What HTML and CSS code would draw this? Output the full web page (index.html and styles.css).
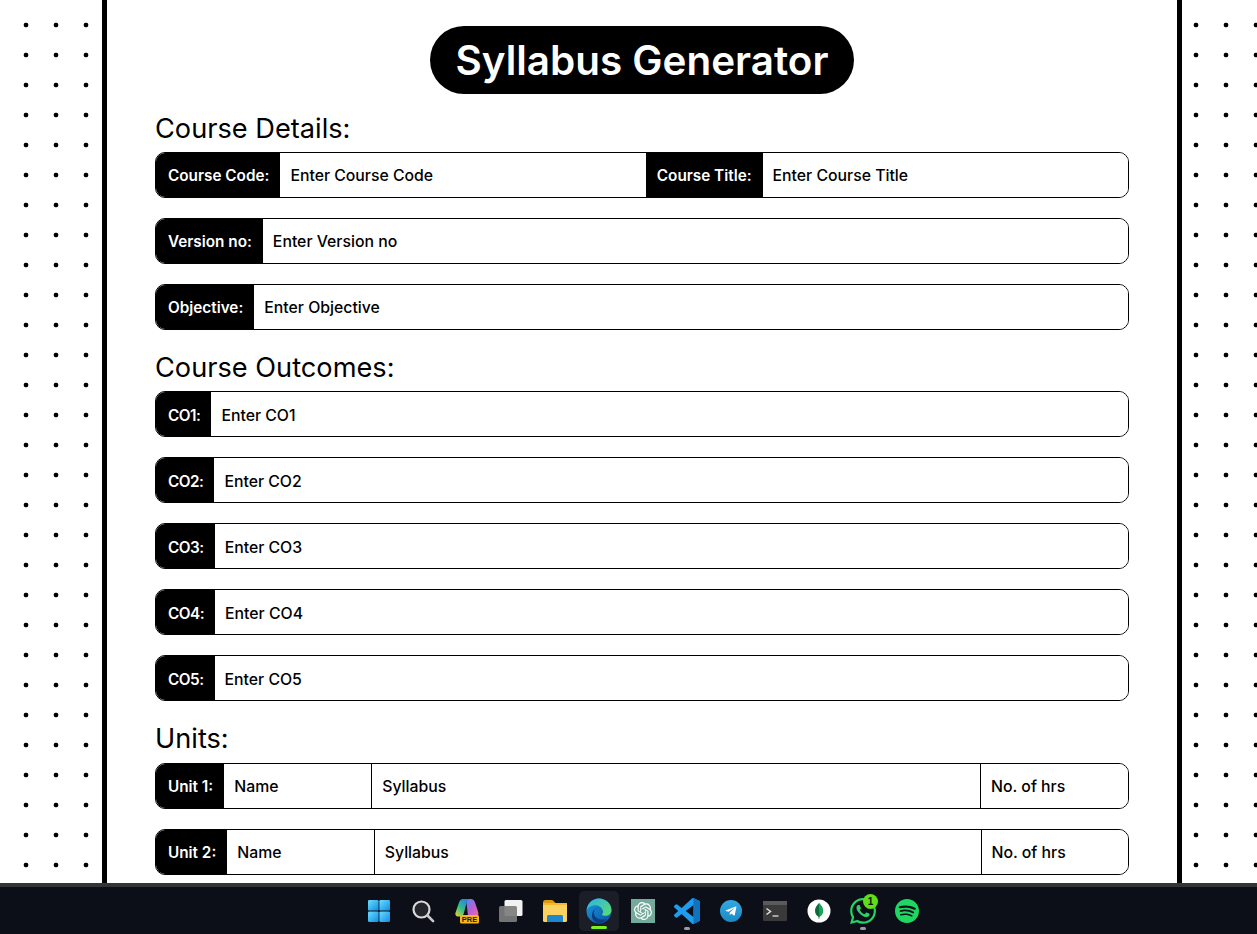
FILE: index.html
```html
<!DOCTYPE html>
<html lang="en">
<head>
  <meta charset="UTF-8" />
  <meta name="viewport" content="width=device-width, initial-scale=1.0"/>
  <title>Syllabus Generator</title>
  <link rel="stylesheet" href="styles.css">
</head>
<body>
  <div class="viewport">
    <main class="sheet">
      <h1 class="title">Syllabus Generator</h1>

      <h2 class="section-title">Course Details:</h2>
      <div class="field">
        <label class="tag tag-first">Course Code:</label>
        <input class="entry" placeholder="Enter Course Code">
        <label class="tag">Course Title:</label>
        <input class="entry" placeholder="Enter Course Title">
      </div>
      <div class="field">
        <label class="tag tag-first">Version no:</label>
        <input class="entry" placeholder="Enter Version no">
      </div>
      <div class="field">
        <label class="tag tag-first">Objective:</label>
        <input class="entry" placeholder="Enter Objective">
      </div>

      <h2 class="section-title">Course Outcomes:</h2>
      <div class="field">
        <label class="tag tag-first tag-short">CO1:</label>
        <input class="entry" placeholder="Enter CO1">
      </div>
      <div class="field">
        <label class="tag tag-first tag-short">CO2:</label>
        <input class="entry" placeholder="Enter CO2">
      </div>
      <div class="field">
        <label class="tag tag-first tag-short">CO3:</label>
        <input class="entry" placeholder="Enter CO3">
      </div>
      <div class="field">
        <label class="tag tag-first tag-short">CO4:</label>
        <input class="entry" placeholder="Enter CO4">
      </div>
      <div class="field">
        <label class="tag tag-first tag-short">CO5:</label>
        <input class="entry" placeholder="Enter CO5">
      </div>

      <h2 class="section-title">Units:</h2>
      <div class="field">
        <label class="tag tag-first">Unit 1:</label>
        <input class="entry entry-small" placeholder="Name">
        <input class="entry entry-wide" placeholder="Syllabus">
        <input class="entry entry-small" placeholder="No. of hrs">
      </div>
      <div class="field">
        <label class="tag tag-first">Unit 2:</label>
        <input class="entry entry-small" placeholder="Name">
        <input class="entry entry-wide" placeholder="Syllabus">
        <input class="entry entry-small" placeholder="No. of hrs">
      </div>
    </main>
  </div>

  <footer class="taskbar">
    <!-- Start -->
    <div class="task">
      <svg width="24" height="24" viewBox="0 0 24 24">
        <defs>
          <linearGradient id="winBlue" x1="0" y1="0" x2="1" y2="1">
            <stop offset="0" stop-color="#6fdcff"/>
            <stop offset="1" stop-color="#0a8fe6"/>
          </linearGradient>
        </defs>
        <rect x="1" y="1" width="10.6" height="10.6" rx="1.2" fill="url(#winBlue)"/>
        <rect x="12.4" y="1" width="10.6" height="10.6" rx="1.2" fill="url(#winBlue)"/>
        <rect x="1" y="12.4" width="10.6" height="10.6" rx="1.2" fill="url(#winBlue)"/>
        <rect x="12.4" y="12.4" width="10.6" height="10.6" rx="1.2" fill="url(#winBlue)"/>
      </svg>
    </div>
    <!-- Search -->
    <div class="task">
      <svg width="24" height="24" viewBox="0 0 24 24" fill="none">
        <circle cx="10.5" cy="10.5" r="8" stroke="#d9d9d9" stroke-width="2.2" fill="#23262c"/>
        <path d="M16.5 16.5l5.6 5.6" stroke="#c9c9c9" stroke-width="2.6" stroke-linecap="round"/>
      </svg>
    </div>
    <!-- Copilot -->
    <div class="task">
      <svg width="26" height="26" viewBox="0 0 26 26">
        <defs>
          <linearGradient id="copA" x1="0" y1="1" x2=".7" y2="0">
            <stop offset="0" stop-color="#f4d21f"/>
            <stop offset=".5" stop-color="#2fc08a"/>
            <stop offset="1" stop-color="#2f7de1"/>
          </linearGradient>
          <linearGradient id="copB" x1="0" y1="0" x2="1" y2="1">
            <stop offset="0" stop-color="#4f8df0"/>
            <stop offset=".5" stop-color="#b55fd8"/>
            <stop offset="1" stop-color="#f26a9a"/>
          </linearGradient>
        </defs>
        <path d="M12 1h5c2 0 3.300 1.300 4 3.500l3.300 10c.6 2-.5 3.500-2.500 3.500H14z" fill="url(#copB)"/>
        <path d="M9 1h7c-1.500 0-2.400.9-3 2.500L10 14.500c-.6 2.600-1.600 4-3 4H4C2 18.500.8 16.800 1.500 14.800L5 4.500C5.700 2.300 7 1 9 1z" fill="url(#copA)"/>
        <rect x="6" y="17" width="19" height="8.500" rx="1.500" fill="#f5b81c"/>
        <text class="pre-text" x="15.500" y="24">PRE</text>
      </svg>
    </div>
    <!-- Task view -->
    <div class="task">
      <svg width="26" height="24" viewBox="0 0 26 24">
        <rect x="6.500" y="1" width="18" height="16" rx="1.500" fill="#f2f2f2"/>
        <rect x="1" y="7" width="18" height="16" rx="1.500" fill="#7d7d7d" fill-opacity=".92"/>
      </svg>
    </div>
    <!-- Explorer -->
    <div class="task">
      <svg width="26" height="24" viewBox="0 0 26 24">
        <path d="M1 3.500C1 2.100 2 1 3.400 1h6.200c.7 0 1.300.3 1.800.8L13.500 4H1z" fill="#d99a12"/>
        <rect x="1" y="4" width="24" height="19" rx="1.500" fill="#fbd160"/>
        <rect x="1" y="4" width="24" height="2" fill="#f3b92e"/>
        <path d="M5 23v-5.500c0-.9.700-1.500 1.500-1.500h13c.8 0 1.500.6 1.500 1.500V23z" fill="#1e88cf"/>
      </svg>
    </div>
    <!-- Edge, active -->
    <div class="task task-active">
      <svg width="26" height="26" viewBox="0 0 26 26">
        <defs>
          <linearGradient id="edgeTop" x1="0" y1="0" x2="1" y2="1">
            <stop offset="0" stop-color="#2bb4e8"/>
            <stop offset="1" stop-color="#5fdc6a"/>
          </linearGradient>
          <linearGradient id="edgeLow" x1="0" y1="0" x2="1" y2="1">
            <stop offset="0" stop-color="#1b9de2"/>
            <stop offset="1" stop-color="#0b4f9e"/>
          </linearGradient>
        </defs>
        <circle cx="13" cy="13" r="12.500" fill="url(#edgeLow)"/>
        <path d="M.6 12C1.500 5.500 6.500.5 13 .5c6.500 0 12.500 5 12.500 11.500 0 3.500-2.800 5.800-6 5.800-2 0-3.500-.6-3.500-1.600 1-1 1.300-2 1-3.200C16.200 9.500 12.500 7 8.800 7.300 5 7.600 2 9.300.6 12z" fill="url(#edgeTop)"/>
        <path d="M12.800 9.800c-3.300 0-5.300 2.800-4.800 6 .6 3.800 4.500 6 8.800 5.800 1.400 0 2.800-.3 4-.9-2.200 3-5.200 4.500-8 4.600 -3-.2-4.800-1.800-6-4-1.400-3-1-8 2-10 1-1 2.500-1.500 4-1.500z" fill="#0a3d86"/>
      </svg>
      <span class="active-bar"></span>
    </div>
    <!-- ChatGPT -->
    <div class="task">
      <svg width="24" height="24" viewBox="0 0 24 24">
        <rect width="24" height="24" fill="#74aa9c"/>
        <path transform="translate(3 3) scale(.75)" fill="#fff" d="M22.2819 9.8211a5.9847 5.9847 0 0 0-.5157-4.9108 6.0462 6.0462 0 0 0-6.5098-2.9A6.0651 6.0651 0 0 0 4.9807 4.1818a5.9847 5.9847 0 0 0-3.9977 2.9 6.0462 6.0462 0 0 0 .7427 7.0966 5.98 5.98 0 0 0 .511 4.9107 6.051 6.051 0 0 0 6.5146 2.9001A5.9847 5.9847 0 0 0 13.2599 24a6.0557 6.0557 0 0 0 5.7718-4.2058 5.9894 5.9894 0 0 0 3.9977-2.9001 6.0557 6.0557 0 0 0-.7475-7.0729zm-9.022 12.6081a4.4755 4.4755 0 0 1-2.8764-1.0408l.1419-.0804 4.7783-2.7582a.7948.7948 0 0 0 .3927-.6813v-6.7369l2.02 1.1686a.071.071 0 0 1 .038.052v5.5826a4.504 4.504 0 0 1-4.4945 4.4944zm-9.6607-4.1254a4.4708 4.4708 0 0 1-.5346-3.0137l.142.0852 4.783 2.7582a.7712.7712 0 0 0 .7806 0l5.8428-3.3685v2.3324a.0804.0804 0 0 1-.0332.0615L9.74 19.9502a4.4992 4.4992 0 0 1-6.1408-1.6464zM2.3408 7.8956a4.485 4.485 0 0 1 2.3655-1.9728V11.6a.7664.7664 0 0 0 .3879.6765l5.8144 3.3543-2.0201 1.1685a.0757.0757 0 0 1-.071 0l-4.8303-2.7865A4.504 4.504 0 0 1 2.3408 7.872zm16.5963 3.8558L13.1038 8.364 15.1192 7.2a.0757.0757 0 0 1 .071 0l4.8303 2.7913a4.4944 4.4944 0 0 1-.6765 8.1042v-5.6772a.79.79 0 0 0-.407-.667zm2.0107-3.0231l-.142-.0852-4.7735-2.7818a.7759.7759 0 0 0-.7854 0L9.409 9.2297V6.8974a.0662.0662 0 0 1 .0284-.0615l4.8303-2.7866a4.4992 4.4992 0 0 1 6.6802 4.66zM8.3065 12.863l-2.02-1.1638a.0804.0804 0 0 1-.038-.0567V6.0742a4.4992 4.4992 0 0 1 7.3757-3.4537l-.142.0805L8.704 5.459a.7948.7948 0 0 0-.3927.6813zm1.0976-2.3654l2.602-1.4998 2.6069 1.4998v2.9994l-2.5974 1.4997-2.6067-1.4997Z"/>
      </svg>
    </div>
    <!-- VS Code -->
    <div class="task">
      <svg width="26" height="26" viewBox="0 0 24 24">
        <path fill="#1f9cf0" d="M23.15 2.587L18.21.21a1.494 1.494 0 0 0-1.705.29l-9.46 8.63-4.12-3.128a.999.999 0 0 0-1.276.057L.327 7.261A1 1 0 0 0 .326 8.74L3.899 12 .326 15.26a1 1 0 0 0 .001 1.479L1.65 17.94a.999.999 0 0 0 1.276.057l4.12-3.128 9.46 8.63a1.492 1.492 0 0 0 1.704.29l4.942-2.377A1.5 1.5 0 0 0 24 20.06V3.939a1.5 1.5 0 0 0-.85-1.352zm-5.146 14.861L10.826 12l7.178-5.448v10.896z"/>
        <path fill="#0f73bd" d="M18.004 0.1l5.146 2.487A1.5 1.5 0 0 1 24 3.939V20.06a1.5 1.500 0 0 1-.85 1.352l-5.146 2.488z"/>
      </svg>
      <span class="open-dot"></span>
    </div>
    <!-- Telegram -->
    <div class="task">
      <svg width="24" height="24" viewBox="0 0 24 24">
        <defs>
          <linearGradient id="tgBlue" x1="0" y1="0" x2="0" y2="1">
            <stop offset="0" stop-color="#35a8e0"/>
            <stop offset="1" stop-color="#1b8ac6"/>
          </linearGradient>
        </defs>
        <circle cx="12" cy="12" r="11" fill="url(#tgBlue)"/>
        <path transform="translate(4.800 4.800) scale(.6)" fill="#fff" d="M9.780 18.650l.28-4.230 7.680-6.920c.34-.31-.07-.46-.52-.19L7.740 13.300 3.640 12c-.88-.25-.89-.86.2-1.300l15.970-6.160c.73-.33 1.430.18 1.150 1.300l-2.720 12.810c-.19.91-.74 1.130-1.500.71L12.600 16.300l-1.990 1.930c-.23.23-.42.42-.83.42z"/>
      </svg>
    </div>
    <!-- Terminal -->
    <div class="task">
      <svg width="24" height="20" viewBox="0 0 24 20">
        <rect width="24" height="20" rx="1" fill="#3a3a3a"/>
        <rect width="24" height="4" fill="#5a5a5a"/>
        <path d="M3.500 7.500l4 3-4 3" fill="none" stroke="#e0e0e0" stroke-width="1.500"/>
        <path d="M9.500 15h6" stroke="#e0e0e0" stroke-width="1.300"/>
      </svg>
    </div>
    <!-- MongoDB Compass -->
    <div class="task">
      <svg width="24" height="24" viewBox="0 0 24 24">
        <circle cx="12" cy="12" r="11.500" fill="#fff"/>
        <path d="M12 4c2.500 2.600 4 5 4 7.800 0 2.800-1.500 5-3.500 6l-.2 2h-.6l-.2-2c-2-1-3.500-3.200-3.500-6C8 9 9.500 6.600 12 4z" fill="#0f6b3f"/>
        <path d="M12 4c2.500 2.600 4 5 4 7.800 0 2.800-1.500 5-3.500 6L12 9z" fill="#13aa52"/>
      </svg>
    </div>
    <!-- WhatsApp, one unread -->
    <div class="task">
      <svg width="26" height="26" viewBox="0 0 24 24">
        <path fill="#25d366" d="M17.472 14.382c-.297-.149-1.758-.867-2.030-.967-.273-.099-.471-.148-.67.15-.197.297-.767.966-.94 1.164-.173.199-.347.223-.644.075-.297-.15-1.255-.463-2.390-1.475-.883-.788-1.480-1.761-1.653-2.059-.173-.297-.018-.458.13-.606.134-.133.298-.347.446-.52.149-.174.198-.298.298-.497.099-.198.05-.371-.025-.52-.075-.149-.669-1.612-.916-2.207-.242-.579-.487-.5-.669-.51-.173-.008-.371-.01-.57-.01-.198 0-.52.074-.792.372-.272.297-1.040 1.016-1.040 2.479 0 1.462 1.065 2.875 1.213 3.074.149.198 2.096 3.2 5.077 4.487.709.306 1.262.489 1.694.625.712.227 1.360.195 1.871.118.571-.085 1.758-.719 2.006-1.413.248-.694.248-1.289.173-1.413-.074-.124-.272-.198-.57-.347m-5.421 7.403h-.004a9.870 9.870 0 01-5.031-1.378l-.361-.214-3.741.982.998-3.648-.235-.374a9.860 9.860 0 01-1.510-5.260c.001-5.450 4.436-9.884 9.888-9.884 2.640 0 5.122 1.030 6.988 2.898a9.825 9.825 0 012.893 6.994c-.003 5.450-4.437 9.884-9.885 9.884m8.413-18.297A11.815 11.815 0 0012.050 0C5.495 0 .16 5.335.157 11.892c0 2.096.547 4.142 1.588 5.945L.057 24l6.305-1.654a11.882 11.882 0 005.683 1.448h.005c6.554 0 11.890-5.335 11.893-11.893a11.821 11.821 0 00-3.480-8.413z"/>
      </svg>
      <span class="badge">1</span>
      <span class="open-dot"></span>
    </div>
    <!-- Spotify -->
    <div class="task">
      <svg width="24" height="24" viewBox="0 0 24 24">
        <path fill="#1ed760" d="M12 0C5.400 0 0 5.400 0 12s5.400 12 12 12 12-5.400 12-12S18.660 0 12 0zm5.521 17.340c-.24.359-.66.48-1.021.24-2.820-1.740-6.360-2.101-10.561-1.141-.418.122-.779-.179-.899-.539-.12-.421.18-.78.54-.9 4.560-1.021 8.520-.6 11.640 1.320.42.18.479.659.301 1.020zm1.440-3.300c-.301.42-.841.6-1.262.3-3.239-1.980-8.159-2.580-11.939-1.380-.479.12-1.020-.12-1.140-.6-.12-.48.12-1.021.6-1.141C9.600 9.900 15 10.561 18.720 12.840c.361.181.54.78.241 1.200zm.12-3.360C15.240 8.400 8.820 8.160 5.160 9.301c-.6.179-1.200-.181-1.380-.721-.18-.601.18-1.200.72-1.381 4.260-1.260 11.280-1.020 15.721 1.621.539.3.719 1.020.419 1.560-.299.421-1.020.599-1.559.3z"/>
      </svg>
    </div>
  </footer>
</body>
</html>
```

FILE: styles.css
```css
* {
  box-sizing: border-box;
}

html, body {
  height: 100%;
}

body {
  margin: 0;
  font-family: "Inter", "Lato", sans-serif;
  background: #fff;
  color: #000;
  display: flex;
  flex-direction: column;
  overflow: hidden;
}

/* Dotted page, sheet sits on top */
.viewport {
  height: 883px;
  overflow: hidden;
  padding-left: 102px;
  background-image: radial-gradient(circle, #000 2px, transparent 2.7px);
  background-size: 30px 30px;
  background-position: 11px 10px;
}

.sheet {
  width: 1080px;
  min-height: 100%;
  background: #fff;
  border-left: 5px solid #000;
  border-right: 5px solid #000;
  padding: 26px 48px 0;
}

.title {
  width: 424px;
  height: 68px;
  margin: 0 auto 16.7px;
  background: #000;
  color: #fff;
  border-radius: 34px;
  font-size: 40.4px;
  font-weight: 600;
  line-height: 69px;
  text-align: center;
}

.section-title {
  margin: 0;
  height: 41.3px;
  font-size: 27.2px;
  font-weight: 400;
  line-height: 35px;
}

.field {
  display: flex;
  height: 46px;
  margin-bottom: 20px;
  border: 1px solid #000;
  border-radius: 10px;
  overflow: hidden;
}

.tag {
  flex: none;
  display: flex;
  align-items: center;
  padding: 2px 11px 0;
  background: #000;
  color: #fff;
  font-size: 15.3px;
  font-weight: 600;
}

.tag-first {
  padding-left: 12px;
}

.tag-short {
  letter-spacing: -.5px;
}

.entry {
  flex: 1 1 0;
  min-width: 0;
  border: none;
  outline: none;
  padding: 2px 10px 0;
  font: 500 15.8px "Inter", "Lato", sans-serif;
  color: #000;
}

.entry::placeholder {
  color: #000;
  opacity: 1;
}

.entry-small {
  flex: 1 1 0;
}

.entry-wide {
  flex: 4.63 1 0;
  border-left: 1px solid #000;
  border-right: 1px solid #000;
}

/* Windows taskbar */
.taskbar {
  flex: none;
  height: 51px;
  display: flex;
  justify-content: center;
  padding-left: 29px;
  background: #0c0f17;
  border-top: 4px solid #333436;
}

.task {
  position: relative;
  width: 44px;
  height: 47px;
  display: flex;
  align-items: center;
  justify-content: center;
}

.task-active::before {
  content: "";
  position: absolute;
  left: 2px;
  top: 4px;
  width: 40px;
  height: 40px;
  background: #1b1e26;
  border-radius: 5px;
}

.task svg {
  position: relative;
}

.active-bar {
  position: absolute;
  left: 14px;
  bottom: 5px;
  width: 16px;
  height: 3px;
  border-radius: 2px;
  background: #76f01e;
}

.open-dot {
  position: absolute;
  left: 19px;
  bottom: 4px;
  width: 6px;
  height: 3px;
  border-radius: 2px;
  background: #9a9ca0;
}

.badge {
  position: absolute;
  left: 22px;
  top: 7px;
  width: 15px;
  height: 15px;
  border-radius: 50%;
  background: #5ee014;
  color: #0c0f17;
  font: 700 10px/15px "Liberation Sans", sans-serif;
  text-align: center;
}

.pre-text {
  font: 800 7.5px "Liberation Sans", sans-serif;
  fill: #1a1a1a;
  text-anchor: middle;
}
```
